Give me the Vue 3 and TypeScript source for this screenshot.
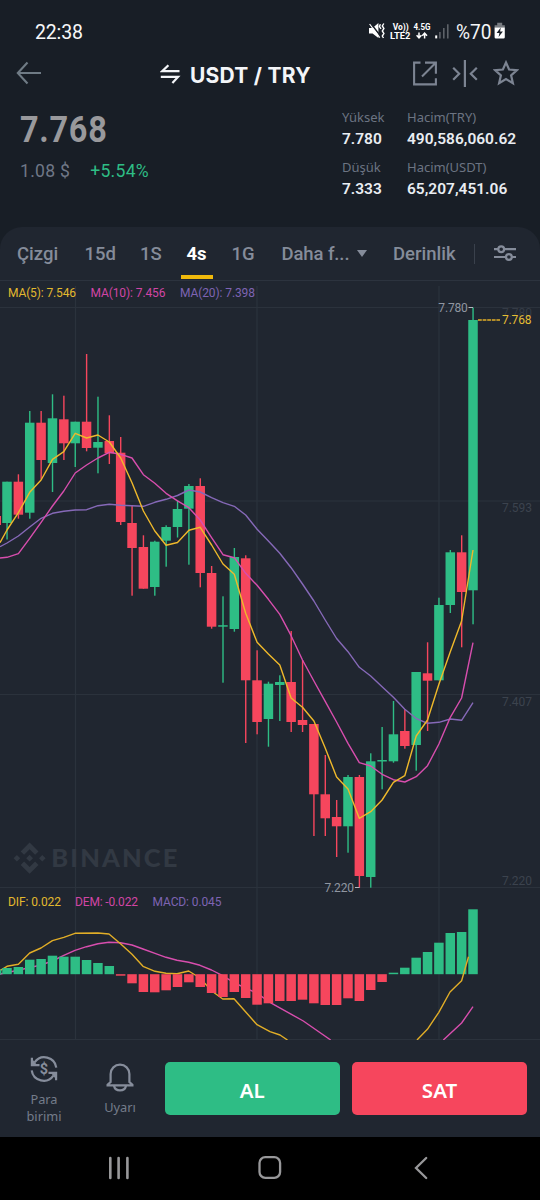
<script setup lang="ts">
type Candle = [top: number, bottom: number, high: number, low: number, up: 0 | 1]
type Point = [x: number, y: number]

const STEP = 11.366
const cx = (i: number): number => 7 + i * STEP

const candles: Candle[] = [
  [481.7, 523, 481.7, 539.5, 1], [481.7, 514.7, 474.3, 518.7, 0], [422.7, 512.7, 411, 518.7, 1],
  [422.7, 460, 411, 479.3, 0], [418.3, 463, 394.3, 492, 1], [419.3, 443.3, 395.7, 460, 0],
  [421.7, 443.3, 421.7, 467, 1], [421.7, 448, 354, 451.3, 0], [442, 447.7, 396.7, 473.3, 1],
  [441, 453.3, 415.3, 464, 0], [452.7, 522, 437, 525, 0], [523, 548, 505, 595.7, 0],
  [547, 588.7, 535.3, 588.7, 0], [541.7, 587, 540.7, 595.7, 1], [527, 540.7, 525.3, 566.7, 1],
  [509, 527, 500.7, 537.5, 1], [486, 508.7, 484, 564.7, 1], [486, 573, 478.3, 587.3, 0],
  [573, 626.7, 566, 628.7, 0], [625.2, 626.7, 596.3, 682.7, 1], [557, 629, 548, 631.7, 1],
  [558.3, 680.3, 555.3, 743, 0], [680.3, 722, 650.3, 734.3, 0], [683.7, 719, 681.7, 746.7, 1],
  [682, 685, 675.3, 721, 1], [682, 722, 631, 732, 0], [720, 725, 660, 732, 0],
  [724, 794.3, 724, 836, 0], [794.3, 818.3, 755, 836, 0], [817, 826.3, 800, 857, 0],
  [777, 826.3, 775, 852.7, 1], [777, 876, 775, 887.7, 0], [761.3, 877, 753.3, 887.7, 1],
  [760, 761.5, 727, 789.3, 1], [734.3, 761.3, 701, 762.7, 1], [731, 746, 709.3, 748.7, 0],
  [672, 745, 672, 770.7, 1], [673.3, 680.7, 642.3, 731, 0], [605, 680.3, 597.7, 680.3, 1],
  [552.3, 605, 550, 613, 1], [552.3, 592, 535.3, 647.3, 0], [320, 590.3, 307.5, 624.3, 1],
]

const ma5 = [530, 512.7, 492.3, 480, 459.3, 451.7, 433.3, 438, 435, 442, 458, 482.7, 511, 531, 545.3, 542.5, 530.3, 527.3, 545, 564, 574.3, 613.3, 642.3, 654, 665, 698, 707.3, 721, 748, 777, 789, 818.3, 811.7, 800, 782.3, 775.7, 736, 720, 684.3, 651.7, 621, 550]
const ma10 = [557.3, 553.7, 538.3, 522.3, 506, 491, 473, 465, 458, 452.3, 454.3, 458, 474.7, 483.3, 493.3, 500.8, 507.7, 520, 537.7, 554.7, 557.7, 573.3, 585.3, 599.3, 614.3, 635.7, 660, 681, 701.3, 722, 743.3, 762.7, 766, 774.3, 779.7, 782, 776.7, 765.7, 744, 717.3, 698, 642.7]
const ma20 = [543, 536, 527, 518.3, 513.3, 511.3, 510, 509.7, 505.7, 504.3, 505.3, 505.7, 506.3, 502.3, 499.3, 495.5, 490, 492, 497.7, 502.7, 506.3, 515, 529.3, 541, 553.3, 567.7, 584, 601, 620, 638.5, 651.7, 667.3, 676, 686.7, 697.3, 709.3, 718.5, 723.3, 722.3, 719, 720.3, 702.7]

const bars = [968, 967, 959.7, 959, 955.7, 956.7, 956.7, 960, 963, 966, 975.7, 983.3, 992, 992.3, 990.3, 987, 982.3, 987, 993, 997, 992, 998, 1004.7, 1003.3, 1001, 1001, 999.7, 1003.3, 1005, 1005, 998.3, 1001, 990, 982, 972.7, 967.7, 957.7, 952, 942.7, 933, 932, 909.3]
const ZERO = 974.2

const dif: Point[] = [[0, 970.7], [7, 966.3], [18.4, 964.3], [29.7, 953], [41, 948], [52.4, 940.7], [63.8, 937.3], [75, 933.3], [98, 933], [109, 934], [120.5, 943.7], [132, 954.3], [143, 966.3], [155, 971.3], [166, 973.3], [177, 973.7], [188.7, 971], [200, 978], [211.5, 990.7], [222.7, 999], [234, 998.7], [245.5, 1011.7], [257, 1024.7], [270, 1031.7], [280, 1035], [287.5, 1040]]
const difTail: Point[] = [[417, 1040], [427.4, 1029.3], [438.8, 1012.3], [450, 992], [461.6, 980.7], [468.5, 956.7]]
const dem: Point[] = [[0, 974], [18, 970.3], [41, 965], [52.4, 961], [63.8, 955.3], [75, 950.3], [86.5, 946.7], [98, 943.7], [109, 942.3], [120.5, 942.7], [132, 945], [143, 949], [155, 953.3], [166, 957.3], [177, 960.3], [188.7, 962.3], [200, 965.3], [211.5, 970], [222.7, 975.7], [234, 982.7], [245.5, 988], [257, 993.3], [271.7, 1003.3], [303.3, 1021], [330.7, 1040]]
const demTail: Point[] = [[443.3, 1040], [461.6, 1023], [473, 1006.7]]

const path = (pts: Point[]): string => pts.map(p => `${p[0].toFixed(1)},${p[1]}`).join(' ')
const series = (start: number, ys: number[]): string =>
  path([[0, start], ...ys.map((y, i): Point => [cx(i), y])])

const tabs = [
  { label: 'Çizgi', id: 'line' },
  { label: '15d', id: 'm15' },
  { label: '1S', id: 'h1' },
  { label: '4s', id: 'h4' },
  { label: '1G', id: 'd1' },
]
const active = 'h4'
</script>

<template>
  <main class="screen">
    <div class="status">
      <span class="clock">22:38</span>
      <svg class="sys" width="142" height="22" viewBox="367 20 142 22">
        <path d="M369 28h3.6l5.8-5v15l-5.8-4.6H369z" fill="#fff" />
        <path d="M370 22.6l10.8 14" stroke="#181e26" stroke-width="1.6" />
        <path d="M369.6 24l10.2 13.6" stroke="#fff" stroke-width="1.2" />
        <path d="M380.4 24.2l-1 2.2 1.6 2.4M383.8 23.5l-1.5 2.5 1.6 2.5-1.6 2.5 1.6 2.5-1.6 2.5 1.2 2" fill="none" stroke="#fff" stroke-width="1.4" />
        <g fill="#fff" font-family="Roboto, sans-serif" font-weight="700">
          <text x="392.7" y="29.8" font-size="9" textLength="16" lengthAdjust="spacingAndGlyphs">Vo))</text>
          <text x="390" y="39" font-size="9" textLength="20.5" lengthAdjust="spacingAndGlyphs">LTE2</text>
          <text x="413.5" y="30.2" font-size="9" textLength="17" lengthAdjust="spacingAndGlyphs">4.5G</text>
        </g>
        <path d="M419 32.5v5M416.6 35.2l2.4 2.6 2.4-2.6M424.6 38.4v-5M422.2 35.8l2.4-2.6 2.4 2.6" fill="none" stroke="#fff" stroke-width="1.5" />
        <path d="M436.2 35.4v3" stroke="#fff" stroke-width="2" />
        <path d="M439.9 32v6.4M443.8 28v10.4M447.8 24.2v14.2" stroke="#5d6268" stroke-width="1.6" />
        <text x="456" y="38.6" font-family="Roboto, sans-serif" font-size="20" fill="#f4f5f6" textLength="35.5" lengthAdjust="spacingAndGlyphs">%70</text>
        <path d="M497.2 22.8h5v2.4h2.6v2.6h-10.2v-2.6h2.6z" fill="#777b80" />
        <path d="M494.6 27.6h10.2v9.6a1.4 1.4 0 0 1-1.4 1.4h-7.4a1.4 1.4 0 0 1-1.4-1.4z" fill="#fff" />
        <path d="M500.8 27.6l-4.2 5.4h2.8l-.8 4 4.3-5.6h-2.8z" fill="#181e26" />
      </svg>
    </div>

    <header class="head">
      <svg class="back" width="26" height="24" viewBox="0 0 26 24" fill="none" stroke="#6f7b85" stroke-width="2.1"><path d="M25 12H2M11.5 1.5L1.8 12l9.7 10.5" /></svg>
      <h1 class="pair">
        <svg width="21" height="22" viewBox="0 0 21 22" fill="none" stroke="#f3f5f8" stroke-width="2.2"><path d="M19.5 8.2H2.2L8.4 2.2M.8 13.9h17.2l-5.6 6" /></svg>
        <span>USDT / TRY</span>
      </h1>
      <div class="actions">
        <svg width="24" height="25" viewBox="0 0 24 25" fill="none" stroke="#7c8492" stroke-width="2.1"><path d="M7.5 1.6H1.1v21.8h21.8v-6.2M12 1.6h10.9v11.2M22.5 2L9 15.6" /></svg>
        <svg width="26" height="27" viewBox="0 0 26 27" fill="none" stroke="#7c8492" stroke-width="2.2"><path d="M12.9 0v27M1.2 7.8l6 6-6 6M24.8 7.8l-6 6 6 6" /></svg>
        <svg width="26" height="26" viewBox="0 0 26 26" fill="none" stroke="#7c8492" stroke-width="2.2"><path d="M13 2.5l3.1 7 7.8.7-5.8 5.1 1.8 7.9-6.9-4.1-6.9 4.1 1.8-7.9-5.8-5.1 7.8-.7z" /></svg>
      </div>
    </header>

    <section class="summary">
      <div class="quote">
        <div class="last">7.768</div>
        <div class="sub"><span class="usd">1.08 $</span><span class="change">+5.54%</span></div>
      </div>
      <dl class="stats">
        <div><dt>Yüksek</dt><dd>7.780</dd></div>
        <div><dt>Hacim(TRY)</dt><dd>490,586,060.62</dd></div>
        <div><dt>Düşük</dt><dd>7.333</dd></div>
        <div><dt>Hacim(USDT)</dt><dd>65,207,451.06</dd></div>
      </dl>
    </section>

    <section class="panel">
      <nav class="tabs">
        <span v-for="t in tabs" :key="t.id" class="tab" :class="[t.id, { on: t.id === active }]">{{ t.label }}</span>
        <span class="tab more">Daha f...<i class="caret"></i></span>
        <span class="tab depth">Derinlik</span>
        <i class="sep"></i>
        <svg class="tune" width="22" height="18" viewBox="0 0 22 18" fill="none" stroke="#858c9a" stroke-width="2.2"><path d="M0 5.2h4M10.4 5.2H22M0 13h11.8M18 13h4" /><circle cx="7.2" cy="5.2" r="2.9" /><circle cx="14.9" cy="13" r="2.9" /></svg>
      </nav>

      <svg class="chart" width="540" height="759" viewBox="0 281 540 759">
        <g class="grid">
          <path d="M75.5 286V1040M257 286V1040M439 286V1040" />
          <path d="M0 307.5H540M0 501H540M0 694.5H540M0 887.5H540M0 1039.5H540" />
        </g>

        <g class="mark">
          <path d="M20.7 851.5l8.9-8.9 8.9 8.9-3.4 3.3-5.5-5.5-5.5 5.5zM20.7 864.9l8.9 8.9 8.9-8.9-3.4-3.3-5.5 5.5-5.5-5.5zM13.6 858.2l3.3-3.3 3.3 3.3-3.3 3.3zM39 858.2l3.3-3.3 3.3 3.3-3.3 3.3zM26.2 858.2l3.4-3.4 3.4 3.4-3.4 3.4z" />
          <text x="51.3" y="867.2" font-size="25.5" textLength="126" lengthAdjust="spacing">BINANCE</text>
        </g>

        <g class="axis">
          <text x="502" y="317" textLength="30" opacity=".75">7.780</text>
          <text x="502" y="512" textLength="30">7.593</text>
          <text x="502" y="705.5" textLength="30">7.407</text>
          <text x="502" y="884.5" textLength="30">7.220</text>
        </g>

        <rect x="0" y="516" width="1" height="9" class="down" />
        <g v-for="(c, i) in candles" :key="i" :class="c[4] ? 'up' : 'down'">
          <rect :x="cx(i) - 0.65" :y="c[2]" width="1.4" :height="c[3] - c[2]" />
          <rect :x="cx(i) - 4.75" :y="c[0]" width="9.5" :height="c[1] - c[0]" />
        </g>

        <g class="curves">
          <polyline :points="series(546.7, ma20)" stroke="#8669b8" />
          <polyline :points="series(558, ma10)" stroke="#d84eae" />
          <polyline :points="series(542.7, ma5)" stroke="#efb92b" />
          <polyline :points="path(dem)" stroke="#d84eae" />
          <polyline :points="path(demTail)" stroke="#d84eae" />
          <polyline :points="path(dif)" stroke="#e2ae27" />
        </g>

        <rect x="0" y="969.5" width="1.4" height="5" class="up" />
        <rect
          v-for="(b, i) in bars" :key="'b' + i" :class="b < ZERO ? 'up' : 'down'"
          :x="cx(i) - 4.75" :y="Math.min(b, ZERO)" width="9.5" :height="Math.abs(b - ZERO)"
        />
        <g class="curves"><polyline :points="path(difTail)" stroke="#e2ae27" /></g>

        <path d="M468.5 307.5h4.5M355 887.5h4.5" stroke="#b3b7be" stroke-width="1.1" />
        <path d="M478 320h22" stroke="#e2ae27" stroke-width="1.3" stroke-dasharray="3.8 .8" />
        <g class="label">
          <text x="438.3" y="311.5" textLength="29.5" fill="#9096a1">7.780</text>
          <text x="324.5" y="891.5" textLength="29.5" fill="#9096a1">7.220</text>
          <text x="502" y="324" textLength="29.5" fill="#e5bd33">7.768</text>
          <text x="8" y="297" textLength="68" fill="#e2b92e">MA(5): 7.546</text>
          <text x="90.5" y="297" textLength="75" fill="#d145a5">MA(10): 7.456</text>
          <text x="180" y="297" textLength="75" fill="#7e64b3">MA(20): 7.398</text>
          <text x="8" y="906" textLength="53" fill="#e2b92e">DIF: 0.022</text>
          <text x="75" y="906" textLength="63" fill="#d145a5">DEM: -0.022</text>
          <text x="152.5" y="906" textLength="69" fill="#7e64b3">MACD: 0.045</text>
        </g>
      </svg>
    </section>

    <footer class="trade">
      <div class="tool currency">
        <svg width="28" height="28" viewBox="0 0 28 28" fill="none" stroke="#868d9b" stroke-width="2.2">
          <path d="M4.6 7.4A12 12 0 0 1 26.3 12.6M1.9 2.8v7.4h7.6M23.4 20.6A12 12 0 0 1 1.7 15.4M26.1 25.2v-7.4h-7.6" />
          <path d="M2.6 4.6l4.6 5.6H2.6zM25.4 23.4l-4.6-5.6h4.6z" fill="#868d9b" stroke="none" />
          <text x="14" y="19.2" text-anchor="middle" font-family="Roboto, sans-serif" font-size="14.5" font-weight="700" fill="#868d9b" stroke="none">$</text>
        </svg>
        <span>Para<br>birimi</span>
      </div>
      <div class="tool alarm">
        <svg width="28" height="29" viewBox="0 0 28 29" fill="none" stroke="#868d9b" stroke-width="2.2"><path d="M4.6 19v-8a9.4 9.4 0 0 1 18.8 0v8l3 2.7v.7H1.6v-.7zM8 23c1.3 5.8 10.7 5.8 12 0" /></svg>
        <span>Uyarı</span>
      </div>
      <button class="buy">AL</button>
      <button class="sell">SAT</button>
    </footer>

    <div class="navbar">
      <svg width="540" height="63" viewBox="0 0 540 63" fill="none" stroke="#98989a">
        <path d="M110.3 21v20M118.6 21v20M127.4 21v20" stroke-width="2.6" stroke-linecap="round" />
        <rect x="259.5" y="20.2" width="20.6" height="20.6" rx="5.8" stroke-width="2.3" />
        <path d="M426.2 21L416 31l10.2 10" stroke-width="2.3" stroke-linecap="round" />
      </svg>
    </div>
  </main>
</template>

<style>
body { margin: 0; background: #181e26; }
</style>

<style scoped>
.screen { width: 540px; height: 1200px; overflow: hidden; display: flex; flex-direction: column; background: #181e26; font-family: Roboto, "Noto Sans", sans-serif; }
.screen * { box-sizing: border-box; }

.status { height: 52px; padding: 20px 31px 0 35px; display: flex; justify-content: space-between; }
.clock { font-size: 19.5px; line-height: 26px; color: #f7f8f9; letter-spacing: -0.15px; }
.sys { display: block; }

.head { height: 48px; padding: 0 21px 0 16px; display: grid; grid-template-columns: 144px 1fr auto; align-items: center; }
.back { margin-top: -6px; }
.pair { margin: 0; display: flex; align-items: center; gap: 9px; color: #f3f5f8; font: 700 21px/26px Inter, sans-serif; letter-spacing: 0.25px; margin-top: -1px; }
.pair svg { margin-top: -4px; }
.actions { display: flex; align-items: center; gap: 15px; margin-top: -6px; }

.summary { height: 127px; padding: 0 20px; display: flex; justify-content: space-between; }
.last { margin-top: 9px; font-size: 36.5px; line-height: 42px; font-weight: 700; letter-spacing: 0.8px; color: #99999c; transform: scaleX(0.89); transform-origin: 0 50%; }
.sub { margin-top: 8px; display: flex; gap: 21px; font-size: 18.5px; line-height: 24px; letter-spacing: 0.3px; transform: scaleX(0.95); transform-origin: 0 50%; }
.usd { color: #6f7786; }
.change { color: #2ebd85; }
.stats { margin: 8px 0 0; width: 178px; display: grid; grid-template-columns: 65px 113px; grid-auto-rows: 49.5px; }
.stats dt { font: 400 13px/18px "Noto Sans", sans-serif; color: #6c7482; white-space: nowrap; }
.stats dd { margin: 3px 0 0; font-size: 15.5px; line-height: 20px; font-weight: 600; color: #e9edf2; white-space: nowrap; }

.panel { height: 813px; background: #202630; border-radius: 22px 22px 0 0; overflow: hidden; }
.tabs { height: 54px; padding: 0 23px 0 17px; display: flex; border-bottom: 1px solid #2c333e; color: #858c9a; font-size: 18.5px; font-weight: 500; }
.tab { height: 54px; line-height: 55px; white-space: nowrap; }
.line { width: 67.5px; }
.m15 { width: 55.5px; }
.h1 { width: 40.5px; }
.h4 { width: 32px; text-align: center; }
.on { color: #fff; font-weight: 700; border-bottom: 4px solid #f0b90b; height: 52px; }
.d1 { width: 69px; padding-left: 19px; }
.more { width: 111.5px; display: flex; align-items: center; letter-spacing: -0.1px; }
.caret { margin: -2px 0 0 8px; border: 5.5px solid transparent; border-top: 7px solid #858c9a; border-bottom: 0; }
.depth { width: 81px; }
.sep { width: 1px; height: 20px; margin: 17px 18.5px 0 0; background: #3a414c; flex: none; }
.tune { margin-top: 17px; flex: none; }

.chart { display: block; }
.grid path { stroke: #2b323c; stroke-width: 1.2; fill: none; }
.up { fill: #2ebd85; }
.down { fill: #f6465d; }
.curves polyline { fill: none; stroke-width: 1.4; stroke-linejoin: round; }
.axis text { font-size: 12px; fill: #3c434e; }
.label text { font-size: 12px; }
.mark { fill: #323943; }
.mark text { font-family: Lato, sans-serif; font-weight: 900; }

.trade { height: 97px; padding: 22px 13px 0 0; display: flex; background: #202630; }
.tool { display: flex; flex-direction: column; align-items: center; color: #747c8a; font: 400 12.8px/17px "Noto Sans", sans-serif; text-align: center; }
.currency { width: 88px; margin-top: -7px; gap: 8px; }
.alarm { width: 64px; margin: 1px 13px 0 0; gap: 7px; }
.trade button { height: 53px; border: 0; border-radius: 5px; padding: 3px 0 0; color: #fff; font: 600 20.5px/24px "Noto Sans", sans-serif; }
.buy { width: 174.5px; margin-right: 12.5px; background: #2ebd85; }
.sell { width: 175px; background: #f6465d; }

.navbar { height: 63px; background: #000; }
.navbar svg { display: block; }
</style>
